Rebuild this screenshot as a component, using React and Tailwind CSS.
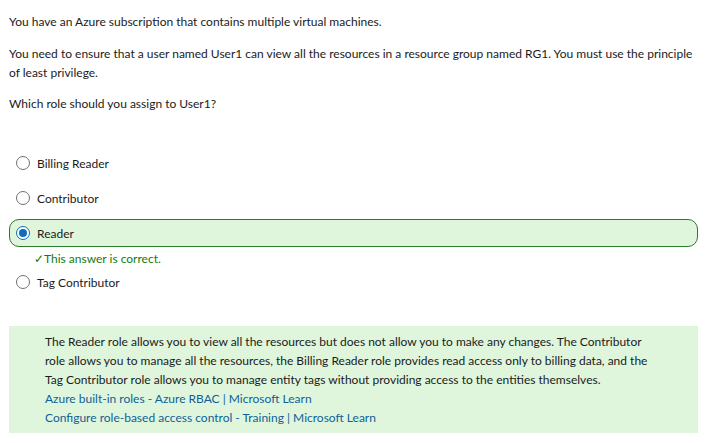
import React from 'react';

const options = [
  { id: 'a', label: 'Billing Reader' },
  { id: 'b', label: 'Contributor' },
  { id: 'c', label: 'Reader', correct: true },
  { id: 'd', label: 'Tag Contributor' },
];

function Radio({ checked }) {
  return (
    <span
      className={
        'flex h-[14px] w-[14px] shrink-0 items-center justify-center rounded-full border bg-white ' +
        (checked ? 'border-[#0f6cbd]' : 'border-[#707070]')
      }
    >
      {checked && <span className="h-[8px] w-[8px] rounded-full bg-[#0f6cbd]" />}
    </span>
  );
}

export default function App() {
  return (
    <div
      className="min-h-[443px] w-[707px] bg-white px-[9px] pt-[12px] text-[12px] leading-[19px] text-[#1b1b1b]"
      style={{ fontFamily: 'Lato, "Noto Sans", sans-serif' }}
    >
      <p>You have an Azure subscription that contains multiple virtual machines.</p>
      <p className="mt-[13px]">
        You need to ensure that a user named User1 can view all the resources in a resource group named RG1. You must use the principle of least privilege.
      </p>
      <p className="mt-[12px]">Which role should you assign to User1?</p>

      <div className="mt-[36px] flex flex-col">
        {options.map((o) =>
          o.correct ? (
            <div key={o.id} className="mt-[7px]">
              <div className="flex h-[28px] items-center gap-[7px] rounded-[10px] border border-[#2c7a2c] bg-[#dff6dd] pl-[6px]">
                <Radio checked />
                <span>Reader</span>
              </div>
              <div className="mt-[2px] flex items-center pl-[25px] text-[#107c10]">
                <span>✓</span>This answer is correct.
              </div>
            </div>
          ) : (
            <label
              key={o.id}
              className={'flex h-[28px] items-center gap-[7px] pl-[7px] ' + (o.id === 'b' ? 'mt-[7px]' : '')}
            >
              <Radio />
              <span>{o.label}</span>
            </label>
          )
        )}
      </div>

      <div className="mt-[30px] bg-[#dff6dd] py-[6px] pl-[36px] pr-[40px]">
        <p>
          The Reader role allows you to view all the resources but does not allow you to make any changes. The Contributor role allows you to manage all the resources, the Billing Reader role provides read access only to billing data, and the Tag Contributor role allows you to manage entity tags without providing access to the entities themselves.
        </p>
        <p className="text-[#0e6198]">Azure built-in roles - Azure RBAC | Microsoft Learn</p>
        <p className="text-[#0e6198]">Configure role-based access control - Training | Microsoft Learn</p>
      </div>
    </div>
  );
}
